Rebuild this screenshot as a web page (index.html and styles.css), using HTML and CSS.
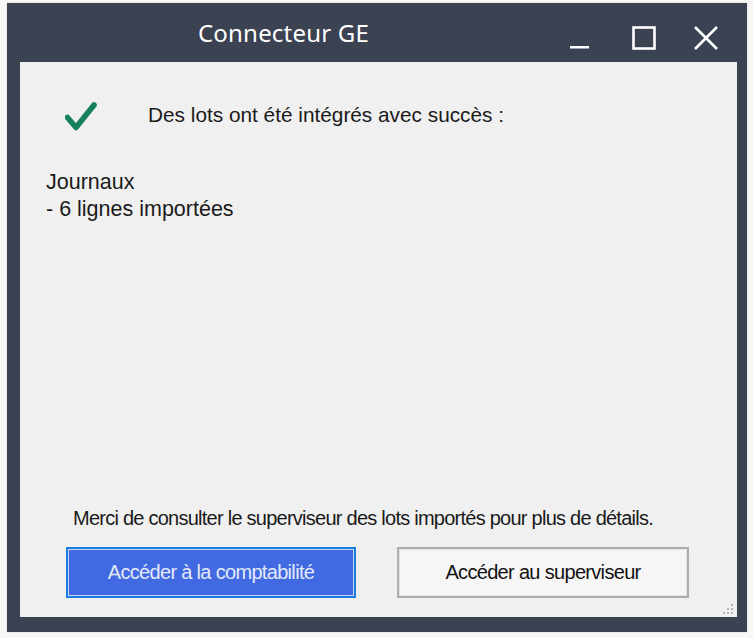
FILE: index.html
```html
<!DOCTYPE html>
<html lang="fr">
<head>
<meta charset="utf-8">
<title>Connecteur GE</title>
<link rel="stylesheet" href="styles.css">
</head>
<body>
<div class="window">
  <div class="titlebar">
    <div class="title">Connecteur GE</div>
    <div class="controls">
      <span class="ctl ctl-min"><svg width="20" height="24" viewBox="0 0 20 24"><rect x="0" y="20" width="19" height="2.5" fill="#ffffff"/></svg></span>
      <span class="ctl ctl-max"><svg width="24" height="24" viewBox="0 0 24 24"><rect x="1.5" y="1.5" width="21" height="21" fill="none" stroke="#ffffff" stroke-width="2.6"/></svg></span>
      <span class="ctl ctl-close"><svg width="24" height="24" viewBox="0 0 24 24"><path d="M1 1 L23 23 M23 1 L1 23" stroke="#ffffff" stroke-width="2.6" fill="none"/></svg></span>
    </div>
  </div>
  <div class="content">
    <div class="header">
      <svg class="check" width="32" height="30" viewBox="0 0 32 30"><path d="M2.5 15.5 L11 25.5 L29 3" fill="none" stroke="#17805c" stroke-width="5.6" stroke-linecap="round" stroke-linejoin="round"/></svg>
      <p class="msg">Des lots ont été intégrés avec succès :</p>
    </div>
    <div class="details">
      <p>Journaux</p>
      <p>- 6 lignes importées</p>
    </div>
    <div class="footer">
      <p class="note">Merci de consulter le superviseur des lots importés pour plus de détails.</p>
      <div class="buttons">
        <button class="btn btn-primary">Accéder à la comptabilité</button>
        <button class="btn btn-secondary">Accéder au superviseur</button>
      </div>
    </div>
    <div class="grip">
      <span></span><span></span><span></span><span></span><span></span><span></span>
    </div>
  </div>
</div>
</body>
</html>
```

FILE: styles.css
```css
html, body {
  margin: 0;
  padding: 0;
  background: #f7f7f7;
}
body {
  width: 753px;
  height: 638px;
  overflow: hidden;
  font-family: "Liberation Sans", Arial, sans-serif;
}
.window {
  margin: 3px 0 0 7px;
  width: 740px;
  height: 629px;
  background: #3b4251;
  display: flex;
  flex-direction: column;
  box-shadow: 0 0 1px rgba(0,0,0,0.3);
}
.titlebar {
  height: 59px;
  display: flex;
  align-items: center;
  position: relative;
}
.title {
  position: absolute;
  left: 0;
  top: 13px;
  width: 553px;
  text-align: center;
  color: #ffffff;
  font-family: "Noto Sans", "Open Sans", sans-serif;
  font-size: 24px;
  letter-spacing: 0.2px;
  line-height: 34px;
}
.controls {
  margin-left: auto;
  display: flex;
  align-items: center;
  padding-right: 29px;
  padding-top: 10px;
}
.ctl {
  display: block;
  line-height: 0;
}
.ctl-min { margin-right: 42px; }
.ctl-max { margin-right: 38px; }
.content {
  margin: 0 10px 15px 13px;
  flex: 1;
  background: #f0f0f0;
  display: flex;
  flex-direction: column;
  position: relative;
}
.header {
  display: flex;
  align-items: flex-start;
  padding: 40px 0 0 45px;
}
.check {
  display: block;
}
.msg {
  margin: 1px 0 0 51px;
  font-size: 20.8px;
  line-height: 24px;
  color: #1a1a1a;
}
.details {
  padding: 37px 0 0 26px;
}
.details p {
  margin: 0;
  font-size: 21.5px;
  line-height: 27px;
  color: #1a1a1a;
}
.footer {
  margin-top: auto;
  padding: 0 0 19px 46px;
}
.note {
  margin: 0 0 18px 7px;
  font-size: 20px;
  line-height: 22px;
  letter-spacing: -0.75px;
  color: #1a1a1a;
}
.buttons {
  display: flex;
  gap: 41px;
}
.btn {
  height: 51px;
  font-family: "Liberation Sans", Arial, sans-serif;
  font-size: 20px;
  letter-spacing: -0.68px;
  padding: 0;
  margin: 0;
  cursor: pointer;
}
.btn-primary {
  width: 290px;
  background: #4169e1;
  color: #e4e9fa;
  border: 2px solid #1c7ee0;
  box-shadow: inset 0 0 0 1px #c9d5f5;
}
.btn-secondary {
  width: 292px;
  background: #f6f6f6;
  color: #111111;
  border: 2px solid #adadad;
  box-shadow: inset 0 0 0 1px #e3e3e3;
}
.grip {
  position: absolute;
  right: 4px;
  bottom: 3px;
  width: 11px;
  height: 11px;
}
.grip span {
  position: absolute;
  width: 2px;
  height: 2px;
  background: #b4b4b4;
}
.grip span:nth-child(1) { right: 0; bottom: 0; }
.grip span:nth-child(2) { right: 4px; bottom: 0; }
.grip span:nth-child(3) { right: 8px; bottom: 0; }
.grip span:nth-child(4) { right: 0; bottom: 4px; }
.grip span:nth-child(5) { right: 4px; bottom: 4px; }
.grip span:nth-child(6) { right: 0; bottom: 8px; }
```
